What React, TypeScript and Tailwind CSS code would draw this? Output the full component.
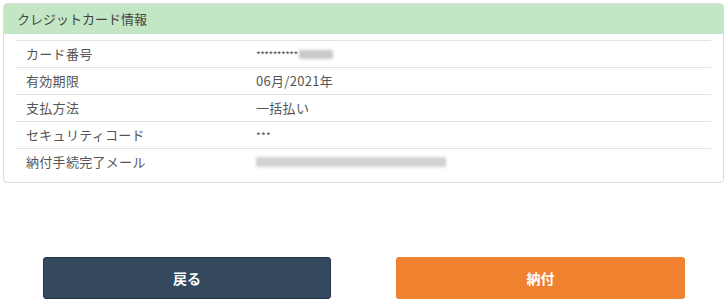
import React from "react";

const rows: { label: string; value: React.ReactNode }[] = [
  {
    label: "カード番号",
    value: (
      <span className="flex items-center">
        <span className="text-[10px] tracking-[-0.5px] text-[#555]">**********</span>
        <span className="ml-[1px] inline-block h-[9px] w-[34px] bg-[#c9c9c9] blur-[1.5px]" />
      </span>
    ),
  },
  { label: "有効期限", value: "06月/2021年" },
  { label: "支払方法", value: "一括払い" },
  {
    label: "セキュリティコード",
    value: <span className="text-[10px] text-[#555]">***</span>,
  },
  {
    label: "納付手続完了メール",
    value: (
      <span className="flex items-center">
        <span className="inline-block h-[10px] w-[190px] bg-[#d2d2d2] blur-[1.5px]" />
      </span>
    ),
  },
];

export default function App() {
  return (
    <div
      className="h-[303px] w-[728px] bg-white text-[#333]"
      style={{ fontFamily: '"Noto Sans CJK JP", "Noto Sans", sans-serif' }}
    >
      <div className="pl-[3px] pr-[4px] pt-[3px]">
        <div className="overflow-hidden rounded-[4px] border border-[#dcdcdc] bg-white">
          <div className="flex h-[30px] items-center bg-[#c3e6c5] pl-[13px] text-[13px] text-[#444]">
            クレジットカード情報
          </div>
          <div className="px-[12px] pb-[7px] pt-[6px]">
            {rows.map((r) => (
              <div
                key={r.label}
                className="flex h-[27px] items-center border-t border-[#e3e3e3] text-[13px] text-[#555]"
              >
                <div className="w-[240px] pl-[10px] tracking-[0.3px]">{r.label}</div>
                <div className="flex-1 tracking-[0.3px]">{r.value}</div>
              </div>
            ))}
          </div>
        </div>
      </div>
      <div className="mt-[74px] flex justify-between pl-[43px] pr-[43px]">
        <button className="flex h-[42px] w-[288px] items-center justify-center rounded-[3px] border border-[#24344a] bg-[#34495e] text-[14px] font-bold text-white">
          戻る
        </button>
        <button className="flex h-[42px] w-[289px] items-center justify-center rounded-[3px] bg-[#f0812f] text-[14px] font-bold text-white">
          納付
        </button>
      </div>
    </div>
  );
}
